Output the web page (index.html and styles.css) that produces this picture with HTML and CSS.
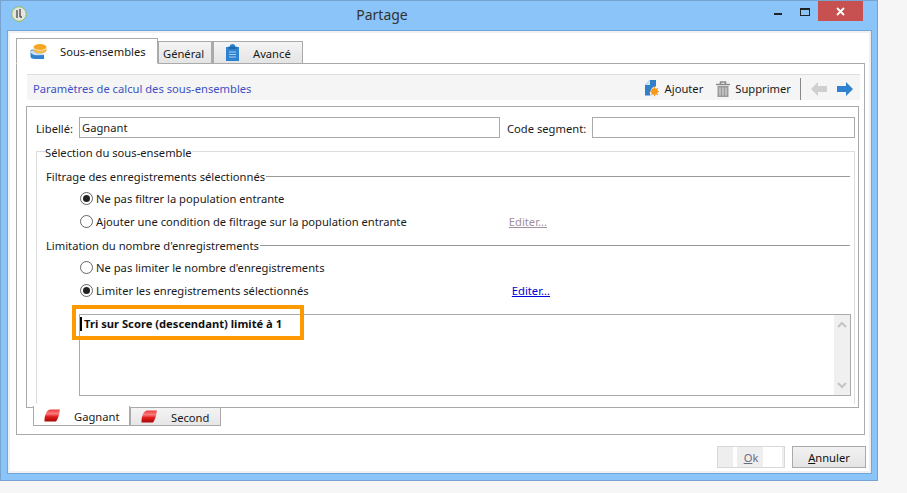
FILE: index.html
```html
<!DOCTYPE html>
<html lang="fr">
<head>
<meta charset="utf-8">
<title>Partage</title>
<link rel="stylesheet" href="styles.css">
</head>
<body>
<svg class="defs" width="0" height="0"><defs><linearGradient id="redfill" x1="0" y1="0" x2="0" y2="1"><stop offset="0" stop-color="#ee3a3a"/><stop offset=".35" stop-color="#fb7c7c"/><stop offset=".6" stop-color="#e01c1c"/><stop offset="1" stop-color="#a80808"/></linearGradient></defs></svg>
<div class="window">
  <header class="titlebar">
    <svg class="app-icon" width="16" height="16" viewBox="0 0 16 16"><circle cx="8" cy="8" r="7.300" fill="#e4e4e0" stroke="#8fbf5a"/><path d="M6 4v8M9 3v8M9 11h2" stroke="#555" stroke-width="1.400" fill="none"/></svg>
    <div class="title">Partage</div>
    <div class="controls">
      <span class="min"></span>
      <span class="max"></span>
      <span class="close"><svg width="9" height="9" viewBox="0 0 9 9"><path d="M1 1l7 7M8 1L1 8" stroke="#fff" stroke-width="1.800"/></svg></span>
    </div>
  </header>
  <div class="client">
    <div class="client-inner">
      <nav class="tabs">
        <div class="tab active tab-sous">
          <svg width="17" height="17" viewBox="0 0 17 17"><ellipse cx="10" cy="4" rx="6.500" ry="3" fill="#f5a623"/><path d="M3.500 4.500v3c0 1.600 3 3 6.500 3s6.500-1.400 6.500-3v-3c0 1.600-3 3-6.500 3s-6.500-1.400-6.500-3z" fill="#f2b84b"/><path d="M4 7.500c0 2 3 3.500 7 3.300l3 .2v5H5c-2.500 0-4.500-.8-4.500-2.500v-5.500c0-.8 1-1.500 2-1.500z" fill="#2f82cf"/><path d="M.5 9c.5 2 3 3 6 3.300L14 12v-1l-3-.2c-4 .2-7-1.300-7-3.300L2 7.500C1 7.700.5 8.300.5 9z" fill="#fff" opacity=".75"/></svg>
          <span>Sous-ensembles</span>
        </div>
        <div class="tab tab-gen"><span>Général</span></div>
        <div class="tab tab-ava">
          <svg width="13" height="17" viewBox="0 0 13 17"><path d="M0 3h4V1.500C4 .8 5 0 6.500 0S9 .8 9 1.500V3h4v14H0z" fill="#2f82cf"/><rect x="2.500" y="2.500" width="8" height="2.500" fill="#1f66ad"/><path d="M3 8h7M3 10.500h7M3 13h7" stroke="#a8d0f2" stroke-width="1"/></svg>
          <span>Avancé</span>
        </div>
      </nav>
      <section class="panel">
        <div class="section-head">
          <h1 class="section-title">Paramètres de calcul des sous-ensembles</h1>
          <div class="tools">
            <span class="tool tool-add">
              <svg width="14" height="17" viewBox="0 0 14 17"><path d="M5 0h6v6.500a5 5 0 0 0-5 3.500 5 5 0 0 0-.5 5.500H0V5z" fill="#2f7fc9"/><path d="M5 0v5H0z" fill="#cfe3f5"/><circle cx="9.500" cy="11.500" r="3.300" fill="#f59a1c"/><path d="M9.500 6.800v9.400M4.800 11.500h9.400M6.200 8.200l6.600 6.600M12.800 8.200l-6.600 6.600" stroke="#f59a1c" stroke-width="1.100"/></svg>
              <span>Ajouter</span>
            </span>
            <span class="tool tool-del">
              <svg width="14" height="16" viewBox="0 0 14 16"><path d="M0 3.500h14M4.500 3V1h5v2" fill="none" stroke="#8a8a8a" stroke-width="1.500"/><path d="M1.500 5h11v11h-11z" fill="#9a9a9a"/><path d="M4 6.500V14.500M7 6.500V14.500M10 6.500V14.500" stroke="#d8d8d8" stroke-width="1.200"/></svg>
              <span>Supprimer</span>
            </span>
            <span class="sep"></span>
            <svg class="arrow-prev" width="16" height="14" viewBox="0 0 16 14"><path d="M0 7l7-7v4h9v6H7v4z" fill="#cfcfcf"/></svg>
            <svg class="arrow-next" width="16" height="14" viewBox="0 0 16 14"><path d="M16 7L9 0v4H0v6h9v4z" fill="#2f82cf"/></svg>
          </div>
        </div>
        <div class="subpanel">
          <div class="form-row">
            <label class="lbl-libelle">Libellé:</label>
            <div class="input input-libelle">Gagnant</div>
            <label class="lbl-code">Code segment:</label>
            <div class="input input-code"></div>
          </div>
          <fieldset class="selection">
            <legend>Sélection du sous-ensemble</legend>
            <div class="group-head"><span>Filtrage des enregistrements sélectionnés</span><i></i></div>
            <div class="option"><span class="radio checked"></span><span class="opt-label">Ne pas filtrer la population entrante</span></div>
            <div class="option"><span class="radio"></span><span class="opt-label">Ajouter une condition de filtrage sur la population entrante</span><a class="edit edit-off">Editer...</a></div>
            <div class="group-head"><span>Limitation du nombre d'enregistrements</span><i></i></div>
            <div class="option"><span class="radio"></span><span class="opt-label">Ne pas limiter le nombre d'enregistrements</span></div>
            <div class="option"><span class="radio checked"></span><span class="opt-label">Limiter les enregistrements sélectionnés</span><a class="edit edit-on">Editer...</a></div>
            <div class="memo">
              <div class="memo-text"><span class="caret"></span><b>Tri sur Score (descendant) limité à 1</b></div>
              <div class="scrollbar">
                <svg width="10" height="7" viewBox="0 0 10 7"><path d="M1 6l4-4 4 4" fill="none" stroke="#c4c4c4" stroke-width="2"/></svg>
                <svg width="10" height="7" viewBox="0 0 10 7"><path d="M1 1l4 4 4-4" fill="none" stroke="#c4c4c4" stroke-width="2"/></svg>
              </div>
              <div class="highlight"></div>
            </div>
          </fieldset>
        </div>
        <nav class="tabs-bottom">
          <div class="btab active btab-g">
            <svg width="16" height="13" viewBox="0 0 16 13"><path d="M.5 12.500C.2 8 2 1 6 .5h9.800C15.500 5 14 10 12 12.500z" fill="url(#redfill)"/></svg>
            <span>Gagnant</span>
          </div>
          <div class="btab btab-s">
            <svg width="16" height="13" viewBox="0 0 16 13"><path d="M.5 12.500C.2 8 2 1 6 .5h9.800C15.500 5 14 10 12 12.500z" fill="url(#redfill)"/></svg>
            <span>Second</span>
          </div>
        </nav>
      </section>
      <footer class="actions">
        <button class="btn btn-ok" type="button"><u>O</u>k</button>
        <button class="btn btn-cancel" type="button"><u>A</u>nnuler</button>
      </footer>
    </div>
  </div>
</div>
</body>
</html>
```
FILE: styles.css
```css
* { box-sizing: border-box; }
html, body { margin: 0; padding: 0; }
body {
  width: 907px;
  height: 493px;
  overflow: hidden;
  background: #f6f6f6;
  font-family: "Noto Sans", "Liberation Sans", sans-serif;
  font-size: 11.2px;
  color: #1a1a1a;
}
.defs { display: block; height: 0; }
.window {
  width: 878px;
  height: 481px;
  background: #8ac4f8;
  border: 1px solid #78a3d0;
  display: flex;
  flex-direction: column;
}
.titlebar {
  height: 29px;
  flex: none;
  display: flex;
  align-items: flex-start;
  padding-left: 10px;
}
.app-icon { margin-top: 5px; flex: none; }
.title {
  flex: none;
  width: 710px;
  text-align: center;
  font-size: 14px;
  line-height: 20px;
  margin-top: 4px;
  color: #333;
}
.controls { display: flex; align-items: flex-start; margin-left: 21px; }
.min { width: 8px; height: 2px; background: #222; margin: 12px 0 0 16px; }
.max { width: 10px; height: 8px; border: 1px solid #222; border-top-width: 2px; margin: 7px 0 0 18px; }
.close {
  width: 45px;
  height: 20px;
  background: #c75050;
  margin-left: 8px;
  display: flex;
  align-items: center;
  justify-content: center;
}
.client {
  flex: 1;
  margin: 0 5px 6px 6px;
  border: 1px solid #6fa6dc;
  display: flex;
}
.client-inner {
  flex: 1;
  background: #fff;
  border: 2px solid #f0f0f0;
  padding: 6px 3px 0 6px;
  display: flex;
  flex-direction: column;
}
.tabs {
  display: flex;
  align-items: flex-end;
  height: 25px;
  position: relative;
  z-index: 1;
  margin-bottom: -1px;
}
.tab {
  height: 23px;
  border: 1px solid #aaa;
  background: linear-gradient(#f4f4f4, #e4e4e4);
  display: flex;
  align-items: center;
  line-height: 20px;
}
.tab span { padding-top: 2px; }
.tab.active { height: 26px; background: #fff; border-bottom-color: #fff; }
.tab-sous { width: 142px; padding-left: 13px; gap: 13px; }
.tab-gen { width: 54px; padding-left: 4px; }
.tab-ava { width: 91px; padding-left: 12px; gap: 14px; border-left-width: 2px; }
.panel {
  height: 372px;
  margin-right: 1px;
  border: 1px solid #aaa;
  padding: 10px 4px 0 9px;
  flex: none;
}
.section-head {
  height: 26px;
  margin-left: 1px;
  background: #f5f5f5;
  border-top: 1px solid #dedede;
  display: flex;
  align-items: center;
  justify-content: space-between;
  padding: 2px 7px 0 6px;
}
.section-title { margin: 0; font-size: 11.2px; font-weight: 400; color: #3d52c4; }
.tools { display: flex; align-items: center; }
.tool { display: flex; align-items: center; }
.tool-add { gap: 6px; margin-right: 13px; }
.tool-del { gap: 5px; margin-right: 9px; }
.sep { width: 1px; height: 22px; background: #888; margin-right: 10px; }
.arrow-prev { margin-right: 10px; }
.subpanel {
  height: 302px;
  margin: 6px 1px 0 0;
  border: 1px solid #aaa;
  padding: 10px 3px 0 9px;
  background: #fff;
}
.form-row { display: flex; align-items: center; height: 21px; }
.form-row label { padding-top: 2px; }
.lbl-libelle { width: 43px; flex: none; }
.input {
  height: 21px;
  border: 1px solid #aaa;
  padding-left: 2px;
  line-height: 20px;
  background: #fff;
}
.input-libelle { width: 421px; flex: none; }
.lbl-code { margin-left: 7px; width: 85px; flex: none; }
.input-code { flex: 1; }
.selection {
  margin: 5px 0 0;
  padding: 5px 4px 9px 9px;
  border: 1px solid #ddd;
  border-bottom: none;
  height: 261px;
  min-width: 0;
}
.selection legend { padding: 3px 0 0; margin-left: -1px; line-height: 13px; height: 16px; }
.group-head {
  height: 23px;
  display: flex;
  align-items: center;
}
.group-head span { padding-top: 1px; }
.group-head i { flex: 1; height: 1px; background: #999; margin: 1px 0 0 1px; }
.option {
  height: 23px;
  display: flex;
  align-items: center;
  padding-left: 34px;
}
.radio {
  width: 13px;
  height: 13px;
  flex: none;
  border: 1px solid #666;
  border-radius: 50%;
  background: #fff;
  margin-right: 3px;
  display: flex;
  align-items: center;
  justify-content: center;
}
.radio.checked::after {
  content: "";
  width: 7px;
  height: 7px;
  border-radius: 50%;
  background: #222;
}
.opt-label { flex: none; }
.edit { text-decoration: underline; margin-left: auto; }
.edit-off { color: #a090a0; margin-right: 303px; }
.edit-on { color: #0000d8; margin-right: 300px; }
.memo {
  position: relative;
  height: 82px;
  margin: 12px -1px 0 33px;
  border: 1px solid #aaa;
  display: flex;
  justify-content: space-between;
}
.memo-text { display: flex; align-items: flex-start; padding: 2px 0 0 0; line-height: 14px; color: #111; }
.caret { width: 2px; height: 14px; background: #000; margin-right: 2px; flex: none; }
.scrollbar {
  width: 16px;
  background: #f0f0f0;
  display: flex;
  flex-direction: column;
  justify-content: space-between;
  align-items: center;
  padding: 6px 0;
}
.highlight {
  position: absolute;
  left: -8px;
  top: -10px;
  width: 232px;
  height: 35px;
  border: 4px solid #ff9900;
}
.tabs-bottom {
  display: flex;
  align-items: flex-start;
  margin: -2px 0 0 7px;
  position: relative;
}
.btab {
  height: 20px;
  border: 1px solid #aaa;
  border-top: none;
  display: flex;
  align-items: center;
  line-height: 18px;
}
.btab span { padding-top: 3px; }
.btab.active { background: #fff; }
.btab-g { width: 97px; padding-left: 10px; gap: 14px; }
.btab-s {
  width: 91px;
  height: 19px;
  margin-top: 1px;
  border-top: 1px solid #aaa;
  padding-left: 10px;
  gap: 14px;
  background: linear-gradient(#f4f4f4, #e6e6e6);
}
.actions {
  display: flex;
  justify-content: flex-end;
  gap: 7px;
  margin-top: 11px;
}
.btn {
  height: 22px;
  padding: 2px 0 0;
  font: inherit;
  line-height: 18px;
}
.btn-ok {
  width: 68px;
  color: #6b6b80;
  border: 1px solid #d8d8d8;
  background: linear-gradient(to right, #eee 15px, #fff 15px, #fff 19px, #eee 19px, #eee 45px, #fff 45px, #fff 64px, #eee 64px);
}
.btn-cancel {
  width: 74px;
  color: #111;
  border: 1px solid #aaa;
  background: linear-gradient(#f2f2f2, #e4e4e4);
}
```
